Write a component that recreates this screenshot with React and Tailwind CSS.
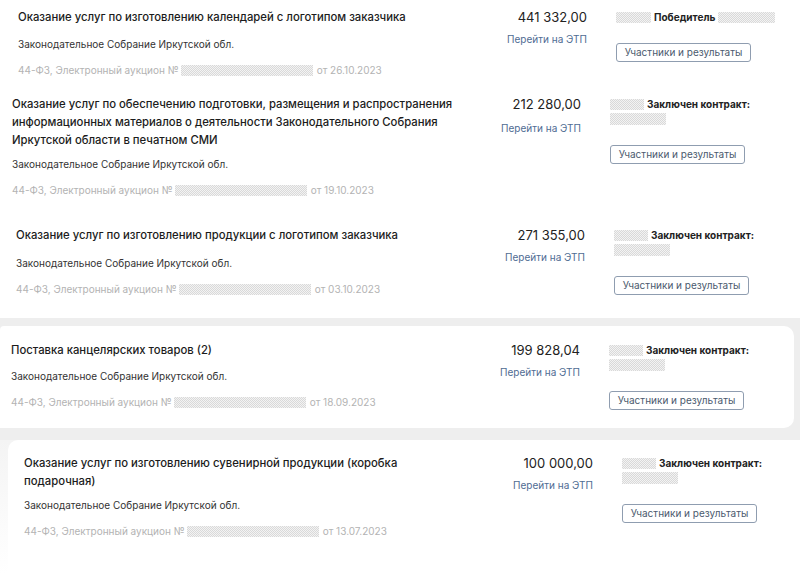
import React from 'react';

const blur =
  'inline-block bg-[repeating-conic-gradient(#d9d9d9_0%_25%,#f3f3f3_0%_50%)] bg-[length:2px_2px]';

function Card({ wrap, title, titleW = 'w-[440px]', titleGap, date, price, winner, linkGap = 'mt-[5px]' }) {
  return (
    <div className={wrap}>
      <div className="w-[440px] shrink-0">
        <div className={`${titleW} text-[11.3px] leading-[18px] font-medium text-[#1c1c1c]`}>{title}</div>
        <div className={`${titleGap} text-[10px] leading-[16px] text-[#333]`}>
          Законодательное Собрание Иркутской обл.
        </div>
        <div className="mt-[10px] flex items-center text-[10px] leading-[16px] text-[#b3b3b3]">
          <span>44-ФЗ, Электронный аукцион №</span>
          <span className={`${blur} ml-[2px] mr-[4px] h-[11px] w-[132px]`} />
          <span>от {date}</span>
        </div>
      </div>
      <div className="w-[129px] shrink-0 text-right">
        <div className="text-[13px] leading-[18px] text-[#222]">{price}</div>
        <div className={`${linkGap} text-[10px] leading-[16px] text-[#4f6c93]`}>Перейти на ЭТП</div>
      </div>
      <div className="ml-[29px] flex flex-col items-start">
        {winner ? (
          <div className="flex h-[18px] items-center text-[10px] font-bold text-[#222]">
            <span className={`${blur} mr-[3px] h-[11px] w-[35px]`} />
            <span>Победитель</span>
            <span className={`${blur} ml-[3px] h-[11px] w-[57px]`} />
          </div>
        ) : (
          <>
            <div className="flex h-[18px] items-center text-[10px] font-bold text-[#222]">
              <span className={`${blur} mr-[3px] h-[11px] w-[34px]`} />
              <span>Заключен контракт:</span>
            </div>
            <span className={`${blur} h-[12px] w-[56px]`} />
          </>
        )}
        <button
          className={`${
            winner ? 'mt-[17px]' : 'mt-[20px]'
          } h-[19px] w-[135px] rounded-[3px] border border-[#8f9db0] bg-white text-[10px] leading-[17px] text-[#4b5a6e]`}
        >
          Участники и результаты
        </button>
      </div>
    </div>
  );
}

export default function App() {
  return (
    <div
      className="flex h-[574px] w-[800px] flex-col overflow-hidden bg-white"
      style={{ fontFamily: 'Inter, "Noto Sans", sans-serif' }}
    >
      <Card
        wrap="flex h-[90px] shrink-0 pl-[18px] pt-[8px]"
        title="Оказание услуг по изготовлению календарей с логотипом заказчика"
        titleGap="mt-[10px]"
        date="26.10.2023"
        price="441 332,00"
        winner
      />
      <Card
        wrap="flex h-[115px] shrink-0 pl-[12px] pt-[5px]"
        title={
          <>
            <span className="block whitespace-nowrap">
              Оказание услуг по обеспечению подготовки, размещения и распространения
            </span>
            <span className="block whitespace-nowrap">
              информационных материалов о деятельности Законодательного Собрания
            </span>
            <span className="block whitespace-nowrap">Иркутской области в печатном СМИ</span>
          </>
        }
        titleGap="mt-[7px]"
        date="19.10.2023"
        price="212 280,00"
        linkGap="mt-[7px]"
      />
      <Card
        wrap="flex h-[113px] shrink-0 pl-[16px] pt-[21px]"
        title="Оказание услуг по изготовлению продукции с логотипом заказчика"
        titleGap="mt-[11px]"
        date="03.10.2023"
        price="271 355,00"
      />
      <div className="shrink-0 bg-[#eeeeee] pt-[8px] pb-[12px] pr-[6px]">
        <Card
          wrap="flex h-[102px] rounded-r-[10px] rounded-tl-[4px] bg-white pl-[11px] pt-[15px]"
          title="Поставка канцелярских товаров (2)"
          titleGap="mt-[9px]"
          date="18.09.2023"
          price="199 828,04"
        />
      </div>
      <div className="flex-1 bg-[linear-gradient(#f4f4f4,#ffffff)] pl-[8px]">
        <Card
          wrap="flex h-full rounded-tl-[10px] bg-white pl-[16px] pt-[14px]"
          title="Оказание услуг по изготовлению сувенирной продукции (коробка подарочная)"
          titleW="w-[400px]"
          titleGap="mt-[7px]"
          date="13.07.2023"
          price="100 000,00"
        />
      </div>
    </div>
  );
}
